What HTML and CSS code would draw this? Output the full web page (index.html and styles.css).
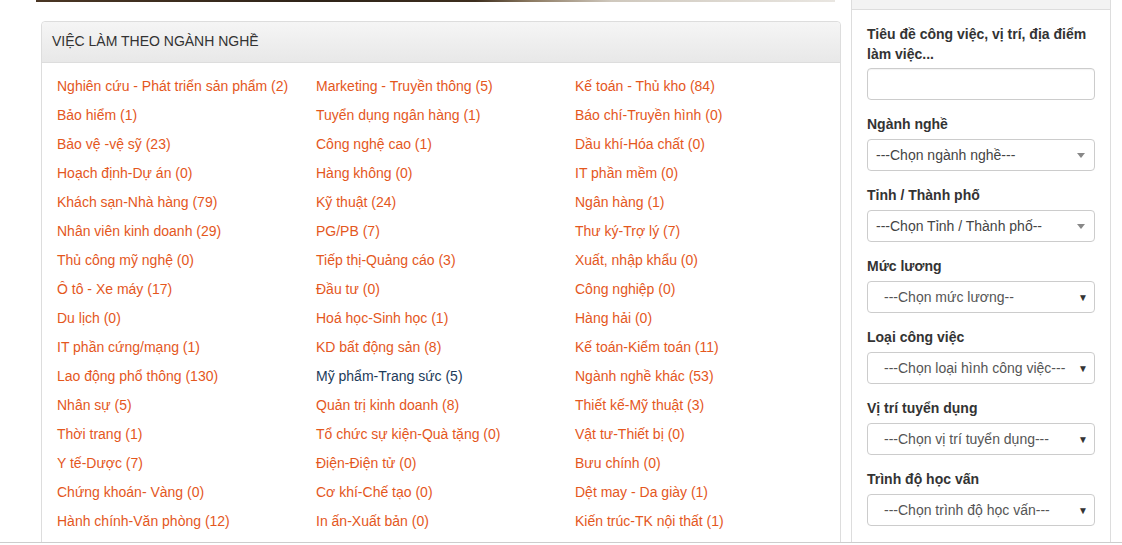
FILE: index.html
```html
<!DOCTYPE html>
<html>
<head>
  <meta charset="utf-8">
  <link rel="stylesheet" href="styles.css">
</head>
<body>
  <div class="page">
    <div class="main-col">
      <div class="banner"></div>
      <div class="panel">
        <div class="panel-heading">VIỆC LÀM THEO NGÀNH NGHỀ</div>
        <div class="panel-body">
          <a href="#" class="job-link">Nghiên cứu - Phát triển sản phẩm (2)</a>
          <a href="#" class="job-link">Marketing - Truyền thông (5)</a>
          <a href="#" class="job-link">Kế toán - Thủ kho (84)</a>
          <a href="#" class="job-link">Bảo hiểm (1)</a>
          <a href="#" class="job-link">Tuyển dụng ngân hàng (1)</a>
          <a href="#" class="job-link">Báo chí-Truyền hình (0)</a>
          <a href="#" class="job-link">Bảo vệ -vệ sỹ (23)</a>
          <a href="#" class="job-link">Công nghệ cao (1)</a>
          <a href="#" class="job-link">Dầu khí-Hóa chất (0)</a>
          <a href="#" class="job-link">Hoạch định-Dự án (0)</a>
          <a href="#" class="job-link">Hàng không (0)</a>
          <a href="#" class="job-link">IT phần mềm (0)</a>
          <a href="#" class="job-link">Khách sạn-Nhà hàng (79)</a>
          <a href="#" class="job-link">Kỹ thuật (24)</a>
          <a href="#" class="job-link">Ngân hàng (1)</a>
          <a href="#" class="job-link">Nhân viên kinh doanh (29)</a>
          <a href="#" class="job-link">PG/PB (7)</a>
          <a href="#" class="job-link">Thư ký-Trợ lý (7)</a>
          <a href="#" class="job-link">Thủ công mỹ nghệ (0)</a>
          <a href="#" class="job-link">Tiếp thị-Quảng cáo (3)</a>
          <a href="#" class="job-link">Xuất, nhập khẩu (0)</a>
          <a href="#" class="job-link">Ô tô - Xe máy (17)</a>
          <a href="#" class="job-link">Đầu tư (0)</a>
          <a href="#" class="job-link">Công nghiệp (0)</a>
          <a href="#" class="job-link">Du lịch (0)</a>
          <a href="#" class="job-link">Hoá học-Sinh học (1)</a>
          <a href="#" class="job-link">Hàng hải (0)</a>
          <a href="#" class="job-link">IT phần cứng/mạng (1)</a>
          <a href="#" class="job-link">KD bất động sản (8)</a>
          <a href="#" class="job-link">Kế toán-Kiểm toán (11)</a>
          <a href="#" class="job-link">Lao động phổ thông (130)</a>
          <a href="#" class="job-link hover">Mỹ phẩm-Trang sức (5)</a>
          <a href="#" class="job-link">Ngành nghề khác (53)</a>
          <a href="#" class="job-link">Nhân sự (5)</a>
          <a href="#" class="job-link">Quản trị kinh doanh (8)</a>
          <a href="#" class="job-link">Thiết kế-Mỹ thuật (3)</a>
          <a href="#" class="job-link">Thời trang (1)</a>
          <a href="#" class="job-link">Tổ chức sự kiện-Quà tặng (0)</a>
          <a href="#" class="job-link">Vật tư-Thiết bị (0)</a>
          <a href="#" class="job-link">Y tế-Dược (7)</a>
          <a href="#" class="job-link">Điện-Điện tử (0)</a>
          <a href="#" class="job-link">Bưu chính (0)</a>
          <a href="#" class="job-link">Chứng khoán- Vàng (0)</a>
          <a href="#" class="job-link">Cơ khí-Chế tạo (0)</a>
          <a href="#" class="job-link">Dệt may - Da giày (1)</a>
          <a href="#" class="job-link">Hành chính-Văn phòng (12)</a>
          <a href="#" class="job-link">In ấn-Xuất bản (0)</a>
          <a href="#" class="job-link">Kiến trúc-TK nội thất (1)</a>
        </div>
      </div>
    </div>

    <div class="sidebar">
      <div class="sidebar-top"></div>
      <div class="sidebar-body">
        <div class="form-group">
          <label>Tiêu đề công việc, vị trí, địa điểm làm việc...</label>
          <div class="text-input"></div>
        </div>
        <div class="form-group">
          <label>Ngành nghề</label>
          <div class="select select2"><span>---Chọn ngành nghề---</span><span class="caret"></span></div>
        </div>
        <div class="form-group">
          <label>Tỉnh / Thành phố</label>
          <div class="select select2"><span>---Chọn Tỉnh / Thành phố--</span><span class="caret"></span></div>
        </div>
        <div class="form-group">
          <label>Mức lương</label>
          <div class="select native"><span>---Chọn mức lương--</span><span class="arrow">&#9660;</span></div>
        </div>
        <div class="form-group">
          <label>Loại công việc</label>
          <div class="select native"><span>---Chọn loại hình công việc---</span><span class="arrow">&#9660;</span></div>
        </div>
        <div class="form-group">
          <label>Vị trí tuyển dụng</label>
          <div class="select native"><span>---Chọn vị trí tuyển dụng---</span><span class="arrow">&#9660;</span></div>
        </div>
        <div class="form-group">
          <label>Trình độ học vấn</label>
          <div class="select native"><span>---Chọn trình độ học vấn---</span><span class="arrow">&#9660;</span></div>
        </div>
      </div>
    </div>
  </div>
</body>
</html>
```

FILE: styles.css
```css
body {
  margin: 0;
  background-color: #ffffff;
  font-family: "Liberation Sans", Arial, sans-serif;
  font-size: 14px;
  color: #333333;
}

.page {
  display: flex;
  height: 542px;
  overflow: hidden;
  border-bottom: 1px solid #cdcdcd;
}

.main-col {
  padding-left: 36px;
  width: 805px;
  flex-shrink: 0;
}

/* bas de la grande image au-dessus */
.banner {
  width: 799px;
  height: 2px;
  background: linear-gradient(to right, #4a3624, #2e2318 35%, #3d2e1e 55%, #8c7a62 62%, #cfc8bd 72%, #e9e6e1 100%);
}

.panel {
  margin-top: 19px;
  margin-left: 5px;
  width: 798px;
  border: 1px solid #dddddd;
  border-radius: 4px;
  height: 600px;
}

.panel-heading {
  padding: 9px 10px 11px;
  line-height: 20px;
  background: linear-gradient(to bottom, #f5f5f5, #e8e8e8);
  border-bottom: 1px solid #dddddd;
  border-radius: 4px 4px 0 0;
  color: #333333;
}

.panel-body {
  display: grid;
  grid-template-columns: 259px 259px 250px;
  grid-auto-rows: 29px;
  padding: 9px 15px;
}

.job-link {
  line-height: 29px;
  color: #e4571d;
  text-decoration: none;
  white-space: nowrap;
}

.job-link.hover {
  color: #1d3b5a;
}

.sidebar {
  margin-left: 10px;
  width: 258px;
  flex-shrink: 0;
  border-left: 1px solid #dddddd;
  border-right: 1px solid #dddddd;
}

.sidebar-top {
  height: 9px;
  background-color: #f3f3f3;
  border-bottom: 1px solid #dddddd;
}

.sidebar-body {
  padding: 14px 15px;
}

.form-group {
  margin-bottom: 14px;
}

.form-group label {
  display: block;
  font-weight: bold;
  line-height: 20px;
  margin-bottom: 5px;
  color: #333333;
}

.form-group:first-child label {
  margin-bottom: 4px;
}

.text-input {
  height: 30px;
  border: 1px solid #cccccc;
  border-radius: 4px;
  box-shadow: inset 0 1px 1px rgba(0, 0, 0, 0.05);
}

.select {
  height: 30px;
  border: 1px solid #cccccc;
  border-radius: 4px;
  display: flex;
  align-items: center;
  justify-content: space-between;
  white-space: nowrap;
}

.select2 {
  padding: 0 9px 0 8px;
  color: #444444;
}

.select2 .caret {
  width: 0;
  height: 0;
  border-left: 4px solid transparent;
  border-right: 4px solid transparent;
  border-top: 5px solid #888888;
}

.native {
  padding: 0 6px 0 16px;
  color: #555555;
}

.native .arrow {
  font-size: 10px;
  color: #333333;
}
```
